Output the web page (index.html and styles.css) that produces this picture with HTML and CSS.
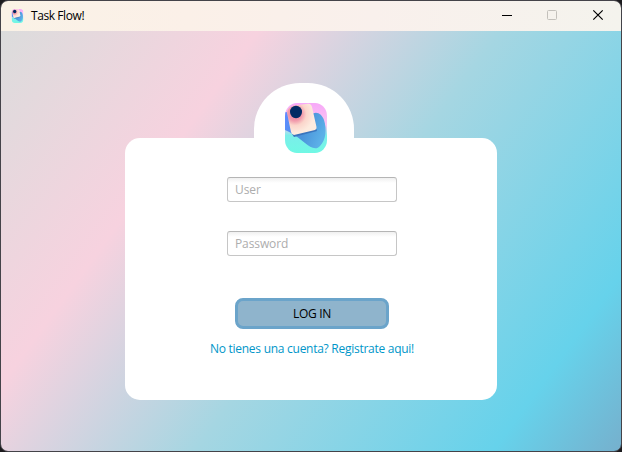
FILE: index.html
```html
<!DOCTYPE html>
<html lang="es">
<head>
<meta charset="utf-8">
<title>Task Flow!</title>
<link rel="stylesheet" href="styles.css">
</head>
<body>
<svg width="0" height="0" class="defs" aria-hidden="true">
  <defs>
    <linearGradient id="back" x1="0" y1="0" x2="0" y2="1"><stop offset="0" stop-color="#f7a8f8"/><stop offset=".45" stop-color="#f9c8f2"/><stop offset=".65" stop-color="#7beeea"/><stop offset="1" stop-color="#70f8e4"/></linearGradient>
    <linearGradient id="wave" gradientUnits="userSpaceOnUse" x1="0" y1="16" x2="38" y2="32"><stop offset="0" stop-color="#5c8cff"/><stop offset=".55" stop-color="#4b94da"/><stop offset="1" stop-color="#5cb0e8"/></linearGradient>
    <radialGradient id="paper" gradientUnits="userSpaceOnUse" cx="10" cy="11" r="19"><stop offset="0" stop-color="#ee7d9c"/><stop offset=".36" stop-color="#f19aab"/><stop offset=".6" stop-color="#fbd5cb"/><stop offset="1" stop-color="#fdebdf"/></radialGradient>
    <clipPath id="tile"><rect width="42" height="50" rx="12" ry="13"/></clipPath>
    <symbol id="logo" viewBox="0 0 42 50">
      <g clip-path="url(#tile)">
        <rect width="42" height="50" fill="url(#back)"/>
        <path d="M0 9 L26 12 C31 7 37 11 39 17 C42 26 41 37 35 43 C31 48 25 44 20 40 C14 35 9 31 0 27Z" fill="url(#wave)"/>
        <path d="M7 31 L31 25 L32 28 L9 34Z" fill="#3b75bd"/>
        <path d="M2 10 C2 5 7 2 13 2 L23 .7 Q26 .5 27 4 L31.5 24 Q32 26 30 27 L9 32 Q7 32 6 29Z" fill="url(#paper)"/>
        <ellipse cx="11" cy="9" rx="6" ry="6.2" fill="#022b64"/>
      </g>
    </symbol>
  </defs>
</svg>
<div class="window">
  <header class="titlebar">
    <svg class="app-icon"><use href="#logo"/></svg>
    <span class="title">Task Flow!</span>
    <svg class="controls" width="102" height="12" viewBox="0 0 102 12" fill="none">
      <path d="M0 6.5H10" stroke="#000"/>
      <rect x="45.5" y="1.5" width="9" height="9" rx="1" stroke="#c3c0bb"/>
      <path d="M91.3 1.3L100.7 10.7M100.7 1.3L91.3 10.7" stroke="#000" stroke-width="1.2"/>
    </svg>
  </header>
  <main class="content">
    <div class="badge"><svg class="logo"><use href="#logo"/></svg></div>
    <form class="card">
      <input class="field" type="text" placeholder="User" aria-label="User">
      <input class="field" type="password" placeholder="Password" aria-label="Password">
      <button class="login" type="button">LOG IN</button>
      <a class="register">No tienes una cuenta? Registrate aqui!</a>
    </form>
  </main>
</div>
</body>
</html>
```
FILE: styles.css
```css
* { box-sizing: border-box; }
body {
  margin: 0;
  height: 452px;
  overflow: hidden;
  background: #1c1b1e;
  font: 12px "Open Sans", "Noto Sans", sans-serif;
}
.defs { position: absolute; }
.window {
  height: 452px;
  border: 1px solid #444349;
  border-radius: 8px;
  overflow: hidden;
  display: flex;
  flex-direction: column;
}
.titlebar {
  height: 30px;
  flex: none;
  display: flex;
  align-items: center;
  padding: 0 17px 0 10px;
  background: linear-gradient(90deg, #faf2e6 0%, #fbf0e8 30%, #f9f0ec 60%, #f4f3ed 100%);
}
.app-icon { width: 13px; height: 14px; margin-top: -1px; }
.title { margin: -1px 0 0 7px; color: #000; letter-spacing: -0.42px; }
.controls { margin-left: auto; margin-top: -3px; }
.content {
  flex: 1;
  padding: 52px 0 0 124px;
  background: linear-gradient(126deg, #dbdcdc 0%, #f7d2df 27.8%, #a5d6e2 54%, #66d2eb 86.2%, #76b0cd 100%);
}
.badge {
  width: 100px;
  height: 100px;
  margin: 0 0 -45px 129px;
  padding: 20px 0 0 31px;
  border-radius: 46px;
  background: #fff;
  position: relative;
  z-index: 1;
}
.logo { display: block; width: 42px; height: 50px; }
.card {
  width: 372px;
  height: 262px;
  padding: 39px 0 0 2px;
  border-radius: 15px;
  background: #fff;
  display: flex;
  flex-direction: column;
  align-items: center;
  position: relative;
}
.field {
  position: relative;
  z-index: 2;
  width: 170px;
  height: 25px;
  margin: 0 0 29px;
  padding: 0 7px;
  border: 1px solid #c6c6c6;
  border-top-color: #b5b5b5;
  border-radius: 3px;
  background: linear-gradient(#f0f0f0, #fff 5px);
  font: inherit;
  letter-spacing: -0.1px;
  outline: none;
}
.field::placeholder { color: #adadad; opacity: 1; }
.login {
  width: 154px;
  height: 31px;
  margin: 13px 0 11px;
  padding: 0;
  border: 3px solid #6ba4ca;
  border-radius: 8px;
  background: #8fb4cc;
  color: #000;
  font: inherit;
  letter-spacing: -0.3px;
}
.register { color: #0096c9; line-height: 18px; white-space: nowrap; letter-spacing: -0.27px; }
```
